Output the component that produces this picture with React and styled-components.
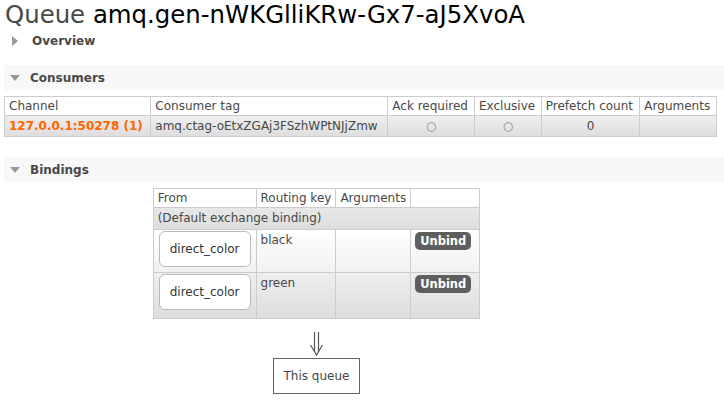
import React from "react";
import styled, { createGlobalStyle } from "styled-components";

const CONSUMERS = [
  {
    channel: "127.0.0.1:50278 (1)",
    tag: "amq.ctag-oEtxZGAj3FSzhWPtNJjZmw",
    ack: "○",
    exclusive: "○",
    prefetch: "0",
    args: "",
  },
];

const BINDINGS = [
  { from: "direct_color", key: "black", alt: false, bottom: 5 },
  { from: "direct_color", key: "green", alt: true, bottom: 8 },
];

const GlobalStyle = createGlobalStyle`
  body {
    margin: 0;
    background: #fff;
    color: #484848;
    font-family: "DejaVu Sans", Verdana, sans-serif;
    font-size: 12px;
  }
`;

const Page = styled.div`
  padding: 2px 0 0 4px;
`;

const Title = styled.h1`
  margin: 0 0 0 1px;
  font-size: 24.4px;
  line-height: 26px;
  font-weight: normal;
  color: #484848;

  b {
    font-weight: normal;
    color: #000;
  }
`;

const SectionHeader = styled.div`
  display: flex;
  align-items: center;
  gap: 10px;
  height: 25px;
  padding-left: 6px;
  margin-top: ${({ top }) => top}px;
  background: ${({ open }) => (open ? "#f8f8f8" : "transparent")};
  font-weight: bold;
  font-size: 12px;
  color: #484848;
`;

const Triangle = styled.span`
  width: 0;
  height: 0;
  ${({ open }) =>
    open
      ? `
    border-left: 5px solid transparent;
    border-right: 5px solid transparent;
    border-top: 6px solid #999;
  `
      : `
    margin-left: 2px;
    margin-right: 4px;
    border-top: 5px solid transparent;
    border-bottom: 5px solid transparent;
    border-left: 6px solid #999;
  `}
`;

const Table = styled.table`
  border-collapse: collapse;
  margin-top: 6px;
  width: ${({ width }) => (width ? `${width}px` : "auto")};
  font-size: 12px;
  color: #484848;

  th,
  td {
    border: 1px solid #ccc;
    padding: 3px 4px;
    line-height: 14px;
    white-space: nowrap;
  }

  th {
    font-weight: normal;
    text-align: left;
    background: #fff;
    padding-top: 2px;
    padding-bottom: 2px;
  }
`;

const DataRow = styled.tr`
  background: ${({ alt }) =>
    alt
      ? "linear-gradient(#eeeeee, #dddddd)"
      : "linear-gradient(#ffffff, #f0f0f0)"};

  td {
    vertical-align: top;
  }
`;

const Center = styled.td`
  text-align: center;
  color: ${({ muted }) => (muted ? "#888" : "inherit")};
`;

const ChannelLink = styled.a`
  color: #ff6600;
  font-weight: bold;
  text-decoration: none;
`;

const SpanRow = styled.tr`
  background: linear-gradient(#e8e8e8, #dddddd);

  td {
    padding-bottom: 4px;
  }
`;

const BindingsArea = styled.div`
  width: 625px;
  display: flex;
  flex-direction: column;
  align-items: center;
`;

const SourceBox = styled.span`
  display: block;
  padding: 10px 10px;
  margin: 0 1px;
  border: 1px solid #bbb;
  border-radius: 6px;
  background: #fff;
  text-align: center;
  color: #333;
`;

const BindingCell = styled.td`
  && {
    padding: 1px 4px ${({ bottom }) => bottom}px;
  }
`;

const ButtonCell = styled.td`
  && {
    padding: 2px 8px 2px 4px;
  }
`;

const UnbindButton = styled.button`
  display: block;
  padding: 2px 5px;
  border: none;
  border-radius: 5px;
  background: #5e5e5e;
  color: #fff;
  font-family: "DejaVu Sans", Verdana, sans-serif;
  font-size: 11.5px;
  font-weight: bold;
  line-height: 14px;
  cursor: pointer;
`;

const Arrow = styled.svg`
  display: block;
  margin-top: 13px;
`;

const QueueBox = styled.div`
  margin-top: 2px;
  padding: 10px 10px;
  border: 1px solid #666;
  font-size: 12px;
  line-height: 14px;
  color: #484848;
`;

export default function App() {
  return (
    <Page>
      <GlobalStyle />
      <Title>
        Queue <b>amq.gen-nWKGlliKRw-Gx7-aJ5XvoA</b>
      </Title>

      <SectionHeader top={0}>
        <Triangle />
        Overview
      </SectionHeader>

      <SectionHeader open top={12}>
        <Triangle open />
        Consumers
      </SectionHeader>
      <Table width={713}>
        <thead>
          <tr>
            <th>Channel</th>
            <th>Consumer tag</th>
            <th>Ack required</th>
            <th>Exclusive</th>
            <th>Prefetch count</th>
            <th>Arguments</th>
          </tr>
        </thead>
        <tbody>
          {CONSUMERS.map((c) => (
            <DataRow alt key={c.tag}>
              <td>
                <ChannelLink href="#">{c.channel}</ChannelLink>
              </td>
              <td>{c.tag}</td>
              <Center muted>{c.ack}</Center>
              <Center muted>{c.exclusive}</Center>
              <Center>{c.prefetch}</Center>
              <Center>{c.args}</Center>
            </DataRow>
          ))}
        </tbody>
      </Table>

      <SectionHeader open top={20}>
        <Triangle open />
        Bindings
      </SectionHeader>
      <BindingsArea>
        <Table>
          <thead>
            <tr>
              <th>From</th>
              <th>Routing key</th>
              <th>Arguments</th>
              <th></th>
            </tr>
          </thead>
          <tbody>
            <SpanRow>
              <td colSpan={4}>(Default exchange binding)</td>
            </SpanRow>
            {BINDINGS.map((b) => (
              <DataRow alt={b.alt} key={b.key}>
                <BindingCell bottom={b.bottom}>
                  <SourceBox>{b.from}</SourceBox>
                </BindingCell>
                <td>{b.key}</td>
                <td></td>
                <ButtonCell>
                  <UnbindButton>Unbind</UnbindButton>
                </ButtonCell>
              </DataRow>
            ))}
          </tbody>
        </Table>
        <Arrow width="14" height="24" viewBox="0 0 14 24">
          <path
            d="M4.5 0 V20 M8.5 0 V20 M0.5 13 L6.5 23 L12.5 13"
            fill="none"
            stroke="#555"
            strokeWidth="1.2"
          />
        </Arrow>
        <QueueBox>This queue</QueueBox>
      </BindingsArea>
    </Page>
  );
}
